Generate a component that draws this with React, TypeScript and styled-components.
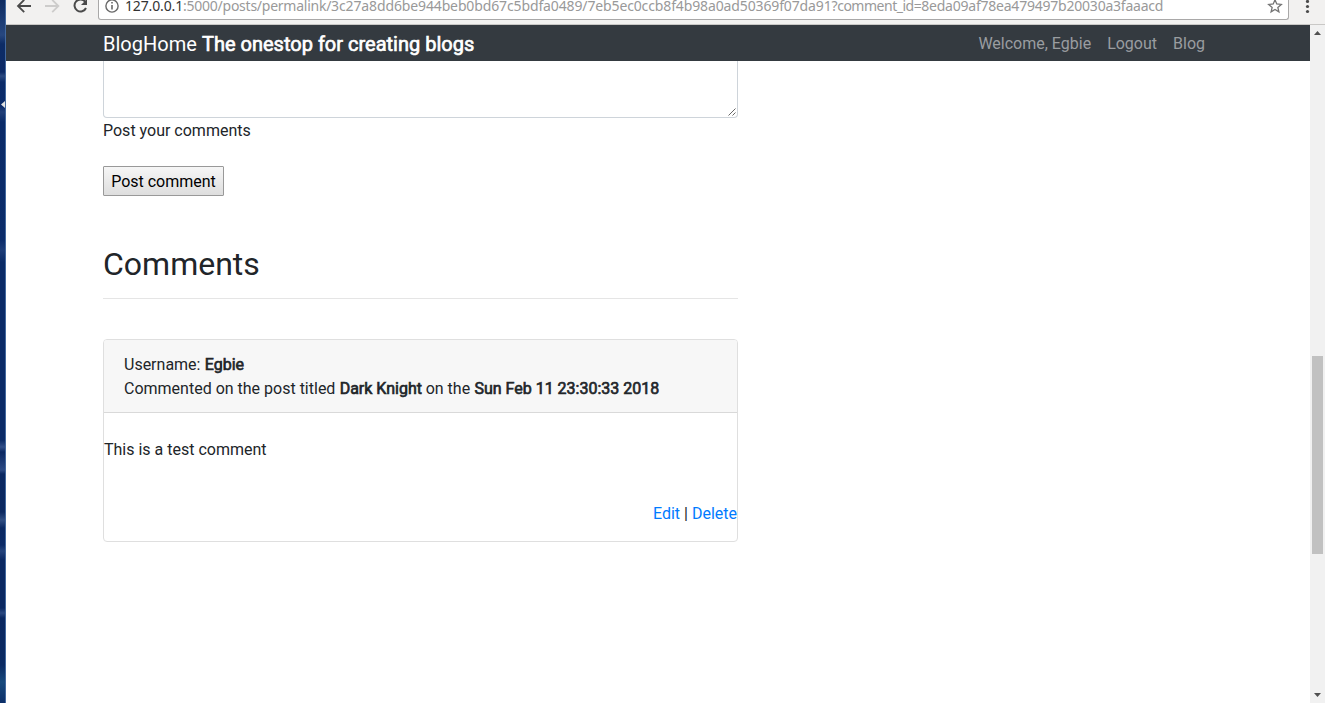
import React from 'react';
import styled, { createGlobalStyle } from 'styled-components';

const GlobalStyle = createGlobalStyle`
  *, *::before, *::after { box-sizing: border-box; }
  body {
    margin: 0;
    overflow: hidden;
    background: #fff;
    color: #212529;
    font: 400 16px/24px Roboto, sans-serif;
  }
`;

const Screen = styled.div`
  display: flex;
  width: 1325px;
  height: 703px;
  overflow: hidden;
`;

const Desktop = styled.aside`
  display: flex;
  justify-content: flex-end;
  flex: 0 0 6px;
  border-right: 1px solid #43699f;
  background: linear-gradient(
    180deg,
    #0d2a60 0, #1b3b74 20px, #27477f 35px, #0d2c66 44px, #0c2a66 72px, #2b4a80 76px,
    #0b2b68 82px, #0a2a6a 106px, #213f78 112px, #0a2a68 122px, #0b2c6a 240px, #1c3c77 250px,
    #0a2a66 262px, #0a2a66 440px, #314f88 447px, #0a2862 452px, #2c4a84 470px, #0a2862 474px,
    #0b2860 512px, #304e83 520px, #0a2862 528px, #0b2a66 545px, #24437c 551px, #0a2862 560px,
    #0a2862 608px, #2a4880 613px, #0a2760 618px, #0a2a62 665px, #17497c 682px, #0d2f68 703px
  );
`;

const LauncherMark = styled.svg`
  display: block;
  flex: none;
  margin-top: 101px;
`;

const Browser = styled.div`
  display: flex;
  flex-direction: column;
  flex: 1;
  min-width: 0;
`;

const Toolbar = styled.header`
  display: flex;
  flex: 0 0 25px;
  background: #f2f1f0;
  border-bottom: 1px solid #c9c8c6;
`;

const NavIcons = styled.svg`
  display: block;
  flex: 0 0 92px;
`;

const AddressBar = styled.div`
  display: flex;
  width: 1191px;
  height: 20px;
  background: #fff;
  border: 1px solid #a9a8a8;
  border-top: 0;
  border-radius: 0 0 3px 3px;
`;

const AddressIcon = styled.svg`
  display: block;
  flex: none;
`;

const Url = styled.div`
  flex: 1;
  height: 12px;
  color: #999;
  font: 14px/12px "Noto Sans", sans-serif;
  white-space: nowrap;
`;

const UrlPart = styled.span<{ $spacing: number; $host?: boolean }>`
  color: ${(p) => (p.$host ? '#333' : 'inherit')};
  letter-spacing: ${(p) => p.$spacing}px;
`;

const Viewport = styled.div`
  display: flex;
  flex: 1;
  min-height: 0;
`;

const Page = styled.div`
  flex: 1;
`;

const Navbar = styled.nav`
  display: flex;
  align-items: center;
  justify-content: space-between;
  height: 36px;
  padding: 2px 105px 0 97px;
  background: #343a40;
`;

const Brand = styled.div`
  color: #fff;
  font-size: 20px;
  line-height: 30px;
  white-space: nowrap;
`;

const Strong = styled.span`
  margin: 0 -0.3px 0 0.3px;
  -webkit-text-stroke: 0.65px currentColor;
`;

const NavLinks = styled.div`
  display: flex;
  gap: 16px;
`;

const NavLink = styled.a`
  color: #9a9da0;
`;

const Content = styled.main`
  width: 635px;
  margin-left: 97px;
`;

const CommentBox = styled.div`
  display: flex;
  align-items: flex-end;
  justify-content: flex-end;
  height: 57px;
  border: 1px solid #ced4da;
  border-top: 0;
  border-radius: 0 0 4px 4px;
`;

const Label = styled.div`
  padding-top: 1px;
`;

const PostButton = styled.button`
  display: block;
  width: 121px;
  height: 30px;
  margin-top: 23px;
  padding: 2px 0 0;
  color: #000;
  font: inherit;
  background: linear-gradient(#f6f6f6, #dedede);
  border: 1px solid #999;
  border-radius: 1px;
`;

const Heading = styled.h2`
  height: 54px;
  margin: 49px 0 40px;
  padding-bottom: 15px;
  border-bottom: 1px solid #e5e5e5;
  font-size: 32px;
  font-weight: 400;
  line-height: 38px;
`;

const Card = styled.article`
  height: 203px;
  border: 1px solid #dfdfdf;
  border-radius: 4px;
`;

const CardHeader = styled.div`
  padding: 13px 20px 11px;
  background: #f7f7f7;
  border-bottom: 1px solid #d9d9d9;
  border-radius: 3px 3px 0 0;
`;

const CardText = styled.p`
  margin: 25px 0 40px;
`;

const Actions = styled.div`
  text-align: right;
`;

const Action = styled.a`
  color: #007bff;
`;

const Scrollbar = styled.div`
  display: flex;
  flex-direction: column;
  align-items: center;
  flex: 0 0 15px;
  background: #f1f1f1;
`;

const ScrollArrow = styled.svg`
  display: block;
  flex: none;
`;

const Thumb = styled.div`
  width: 11px;
  height: 198px;
  margin: 316px 0 134px;
  background: #c1c1c1;
`;

export default function App() {
  return (
    <>
      <GlobalStyle />
      <Screen>
        <Desktop>
          <LauncherMark width="4" height="7" viewBox="0 0 4 7">
            <path d="M4 0v7L0 3.5z" fill="#e2e2e2" />
          </LauncherMark>
        </Desktop>
        <Browser>
          <Toolbar>
            <NavIcons width="92" height="24" viewBox="0 0 92 24" fill="none" strokeWidth="1.8">
              <path d="M25 6H12M18.2-.2 12 6l6.2 6.2" stroke="#4a4a4a" />
              <path d="M39 6h13M46.2-.2 52.4 6l-6.2 6.2" stroke="#cdcccb" />
              <path d="M79.3 1.9A6 6 0 1 0 80 8" stroke="#4a4a4a" strokeWidth="2" />
              <path d="M81-1v6h-6z" fill="#4a4a4a" />
            </NavIcons>
            <AddressBar>
              <AddressIcon width="26" height="19" viewBox="0 0 26 19">
                <circle cx="13" cy="6" r="6.1" fill="none" stroke="#696969" strokeWidth="1.4" />
                <path d="M12.2 2h1.6v1.6h-1.6zM12.2 5h1.6v4.5h-1.6z" fill="#696969" />
              </AddressIcon>
              <Url>
                <UrlPart $host $spacing={-0.14}>127.0.0.1</UrlPart>
                <UrlPart $spacing={-0.25}>:5000/posts/permalink/</UrlPart>
                <UrlPart $spacing={-0.13}>
                  3c27a8dd6be944beb0bd67c5bdfa0489/7eb5ec0ccb8f4b98a0ad50369f07da91
                </UrlPart>
                <UrlPart $spacing={-0.49}>?comment_id=</UrlPart>
                <UrlPart $spacing={-0.22}>8eda09af78ea479497b20030a3faaacd</UrlPart>
              </Url>
              <AddressIcon width="24" height="19" viewBox="0 0 24 19">
                <path
                  d="m11-.2 1.75 4.2 4.55.4-3.45 3 1.05 4.45L11 9.5l-3.9 2.35 1.05-4.45-3.45-3 4.55-.4z"
                  fill="none"
                  stroke="#747474"
                  strokeWidth="1.3"
                />
              </AddressIcon>
            </AddressBar>
            <AddressIcon width="36" height="19" viewBox="0 0 36 19" fill="#4a4a4a">
              <circle cx="18.5" cy="1.5" r="1.6" />
              <circle cx="18.5" cy="6.5" r="1.6" />
              <circle cx="18.5" cy="11.5" r="1.6" />
            </AddressIcon>
          </Toolbar>
          <Viewport>
            <Page>
              <Navbar>
                <Brand>
                  BlogHome <Strong>The onestop for creating blogs</Strong>
                </Brand>
                <NavLinks>
                  <NavLink>Welcome, Egbie</NavLink>
                  <NavLink>Logout</NavLink>
                  <NavLink>Blog</NavLink>
                </NavLinks>
              </Navbar>
              <Content>
                <CommentBox>
                  <svg width="10" height="10" viewBox="0 0 10 10" stroke="#555" strokeWidth="0.9">
                    <path d="M1.5 8.5 8.5 1.5M5.5 8.5 8.5 5.5" />
                  </svg>
                </CommentBox>
                <Label>Post your comments</Label>
                <PostButton>Post comment</PostButton>
                <Heading>Comments</Heading>
                <Card>
                  <CardHeader>
                    <div>
                      Username: <Strong>Egbie</Strong>
                    </div>
                    <div>
                      Commented on the post titled <Strong>Dark Knight</Strong> on the{' '}
                      <Strong>Sun Feb 11 23:30:33 2018</Strong>
                    </div>
                  </CardHeader>
                  <CardText>This is a test comment</CardText>
                  <Actions>
                    <Action>Edit</Action> | <Action>Delete</Action>
                  </Actions>
                </Card>
              </Content>
            </Page>
            <Scrollbar>
              <ScrollArrow width="15" height="15" viewBox="0 0 15 15" fill="#505050">
                <path d="M4 10h7L7.5 6z" />
              </ScrollArrow>
              <Thumb />
              <ScrollArrow width="15" height="15" viewBox="0 0 15 15" fill="#505050">
                <path d="M4 5h7L7.5 9z" />
              </ScrollArrow>
            </Scrollbar>
          </Viewport>
        </Browser>
      </Screen>
    </>
  );
}
